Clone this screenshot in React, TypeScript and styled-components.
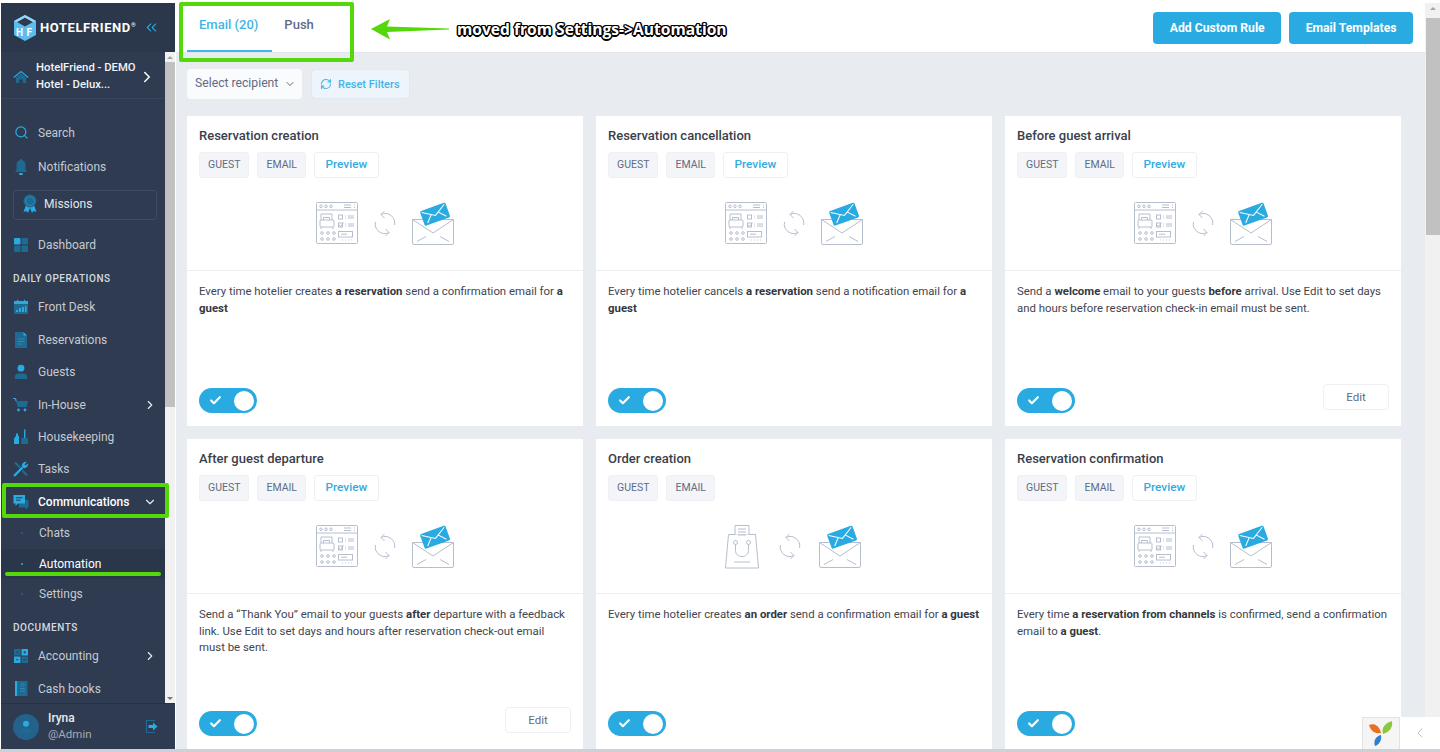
import React from "react";
import styled, { createGlobalStyle } from "styled-components";
import { ChevronRight, ChevronDown, ChevronLeft, ChevronsLeft, RefreshCw, Search, Check } from "lucide-react";

const BLUE = "#29abe2";
const DIM = "#1f6a92";

const GlobalStyle = createGlobalStyle`
  * { box-sizing: border-box; }
  html, body { margin: 0; padding: 0; height: 100%; overflow: hidden; background: #fff; }
  body { font-family: Roboto, "Liberation Sans", sans-serif; }
`;

/* ---------- sidebar icons ---------- */
const HomeIcon = () => (
  <svg width="16" height="16" viewBox="0 0 16 16">
    <path d="M3 8.500 8 4.500l5 4V14H9.800v-3.400H6.200V14H3z" fill={DIM} />
    <path d="M.8 8.500 8 2.500l7.200 6" fill="none" stroke={BLUE} strokeWidth="1.200" />
  </svg>
);
const BellIcon = () => (
  <svg width="16" height="18" viewBox="0 0 16 18">
    <path d="M8 1c.7 0 1 .5 1 1.100 2.400.6 3.500 2.700 3.500 5V12l1.500 2H2l1.500-2V7.100c0-2.300 1.100-4.400 3.500-5C7 1.500 7.300 1 8 1z" fill={DIM} />
    <rect x="6" y="15" width="4" height="2" rx="1" fill={BLUE} />
  </svg>
);
const MedalIcon = () => (
  <svg width="16" height="20" viewBox="0 0 16 20">
    <path d="M4 11 1.500 18l3-1 1.500 2 2-5 2 5 1.500-2 3 1L12 11z" fill={BLUE} />
    <circle cx="8" cy="7" r="6.500" fill={DIM} />
    <circle cx="8" cy="7" r="4.300" fill="none" stroke="#2f88b5" strokeWidth="1" />
  </svg>
);
const DashIcon = () => (
  <svg width="16" height="16" viewBox="0 0 16 16">
    <rect x="1" y="1" width="6.500" height="6.500" rx="1" fill={BLUE} />
    <rect x="8.500" y="1" width="6.500" height="6.500" rx="1" fill={DIM} />
    <rect x="1" y="8.500" width="6.500" height="6.500" rx="1" fill={DIM} />
    <rect x="8.500" y="8.500" width="6.500" height="6.500" rx="1" fill={DIM} />
  </svg>
);
const CalendarIcon = () => (
  <svg width="16" height="16" viewBox="0 0 16 16">
    <rect x="1" y="2" width="14" height="13" rx="1" fill={DIM} />
    <rect x="1" y="2" width="14" height="3" fill={BLUE} />
    <rect x="4" y="0.800" width="1.200" height="2.400" fill={BLUE} />
    <rect x="11" y="0.800" width="1.200" height="2.400" fill={BLUE} />
    <path d="M3 11h2v2H3zM6 9h2v4H6zM9 8h2v5H9zM12 7h1.500v6H12z" fill={BLUE} />
  </svg>
);
const DocIcon = () => (
  <svg width="16" height="18" viewBox="0 0 16 18">
    <path d="M2 1h8.500L14 4.500V17H2z" fill={DIM} />
    <path d="M10.500 1 14 4.500h-3.500z" fill={BLUE} />
    <path d="M4.500 8h7M4.500 10.500h7M4.500 13h4.500" stroke="#2f88b5" strokeWidth="1" />
  </svg>
);
const PersonIcon = ({ size = 16 }: { size?: number }) => (
  <svg width={size} height={size} viewBox="0 0 16 16">
    <circle cx="8" cy="4.200" r="3.400" fill={BLUE} />
    <path d="M1.800 15v-2.200c0-2 1.600-3.400 3.400-3.400h5.600c1.800 0 3.400 1.400 3.400 3.400V15z" fill={DIM} />
  </svg>
);
const CartIcon = () => (
  <svg width="16" height="16" viewBox="0 0 16 16">
    <path d="M0 1.500h2.500L3.200 4" stroke={BLUE} strokeWidth="1.200" fill="none" />
    <path d="M3 4h12l-1.500 6H4.500z" fill={DIM} />
    <circle cx="5.500" cy="13" r="1.400" fill={BLUE} />
    <circle cx="12" cy="13" r="1.400" fill={BLUE} />
  </svg>
);
const CleanIcon = () => (
  <svg width="16" height="16" viewBox="0 0 16 16">
    <path d="M1 9.500 3 7h3v8H1z" fill={BLUE} />
    <rect x="3" y="4.500" width="2" height="2.500" fill={BLUE} />
    <rect x="11" y="0.500" width="1.400" height="8.500" fill={BLUE} />
    <path d="M8.500 9h6.300l.5 6H8z" fill={DIM} />
  </svg>
);
const ToolsIcon = () => (
  <svg width="16" height="16" viewBox="0 0 16 16">
    <path d="M1 15 9.500 6.500" stroke={BLUE} strokeWidth="2.400" />
    <path d="M8.800 5.200A4 4 0 0 1 13.800 1l-2.300 2.300 1.200 1.200L15 2.200a4 4 0 0 1-4.200 5z" fill={BLUE} />
    <path d="M2 1.500 7.500 7M9.500 9.500l4.500 5" stroke={DIM} strokeWidth="2.200" />
  </svg>
);
const ChatIcon = () => (
  <svg width="16" height="16" viewBox="0 0 16 16">
    <path d="M6 6h9.500v7.500H14v2l-2.500-2H6z" fill={DIM} />
    <path d="M.5 1h11.500v8.500H5L2.500 12V9.500h-2z" fill={BLUE} />
    <path d="M3 3.800h6.500M3 6.200h4.500" stroke="#2d3a4f" strokeWidth="1" />
  </svg>
);
const CalcIcon = () => (
  <svg width="16" height="16" viewBox="0 0 16 16">
    <rect x="1" y="1" width="6.500" height="6.500" fill={DIM} />
    <rect x="8.500" y="1" width="6.500" height="6.500" fill={BLUE} />
    <rect x="1" y="8.500" width="6.500" height="6.500" fill={BLUE} />
    <rect x="8.500" y="8.500" width="6.500" height="6.500" fill={DIM} />
    <path d="M3 4.200h2.500M10.500 4.200h2.500M11.700 3v2.500M3 11.700h2.500M10.500 11.700h2.500" stroke="#2d3a4f" strokeWidth="0.800" />
  </svg>
);
const BookIcon = () => (
  <svg width="16" height="17" viewBox="0 0 16 17">
    <rect x="2" y="1" width="2.500" height="15" fill={BLUE} />
    <rect x="4.500" y="1" width="10" height="15" fill={DIM} />
    <path d="M7 8.500h5M7 11h5" stroke="#2f88b5" strokeWidth="1" />
    <circle cx="9.500" cy="5" r="1.600" fill="none" stroke="#2f88b5" strokeWidth="0.800" />
  </svg>
);
const ExitIcon = () => (
  <svg width="14" height="15" viewBox="0 0 14 15">
    <path d="M10 1.500H1.500v12H10" fill="none" stroke={DIM} strokeWidth="1.200" />
    <path d="M3.500 6h4.500V3.500l4.500 4-4.500 4V9H3.500z" fill={BLUE} />
  </svg>
);
const LogoMark = () => (
  <svg width="24" height="28" viewBox="0 0 24 28">
    <path d="M12 1 23 7v14l-11 6-11-6V7z" fill="#5dbcee" />
    <path d="M12 3.500 20 8l-8 4.500L4 8z" fill="#2d3a4f" />
    <path d="M12 1 23 7l-3 1-8-4.500L4 8 1 7z" fill="#9ad6f5" />
    <text x="3" y="22" fontFamily="Roboto, sans-serif" fontSize="10" fontWeight="700" fill="#fff">H</text>
    <text x="13.500" y="22" fontFamily="Roboto, sans-serif" fontSize="10" fontWeight="700" fill="#fff">F</text>
  </svg>
);

/* ---------- card illustrations ---------- */
const LINE = "#b6bece";

const HotelGlyph = () => (
  <g fill="none" stroke={LINE} strokeWidth="1">
    <rect x="0.500" y="0.500" width="41" height="41" rx="1" />
    <path d="M.5 8h41" />
    <circle cx="5" cy="4.300" r="1.300" />
    <circle cx="10" cy="4.300" r="1.300" />
    <circle cx="15" cy="4.300" r="1.300" />
    <path d="M28 3h7M28 5.500h7M38 3h1M38 5.500h1" />
    <path d="M5 18v-6h11v6" />
    <rect x="4" y="18" width="14" height="7" rx="1" />
    <path d="M5 25v2M17 25v2M7.500 18v-2.500h6V18" />
    <rect x="22.500" y="13" width="4" height="4" />
    <rect x="22.500" y="21" width="4" height="4" />
    <path d="M23 23l1.500 1.500 3-4M29 14h.8M29 16h.8M32 14h6M32 16h6M29 22h.8M29 24h.8M32 22h6M32 24h6" />
    <circle cx="6" cy="31" r="1.300" /><circle cx="12" cy="31" r="1.300" /><circle cx="18" cy="31" r="1.300" />
    <circle cx="6" cy="37" r="1.300" /><circle cx="12" cy="37" r="1.300" /><circle cx="18" cy="37" r="1.300" />
    <rect x="22.500" y="29.500" width="14" height="5.500" />
    <path d="M25 32.200h6M26 38h.8M29 38h.8M32 38h.8M35 38h.8" />
  </g>
);
const BagGlyph = () => (
  <g fill="none" stroke={LINE} strokeWidth="1">
    <path d="M3.500 9.500h27L33.500 43H.5z" />
    <path d="M10 9.500V.5h14v9" fill="#fff" />
    <path d="M13 4h8M13 7h8M13 10h8" />
    <circle cx="10.500" cy="17.500" r="2" />
    <circle cx="23.500" cy="17.500" r="2" />
    <path d="M10.500 19.500v6c0 8 13 8 13 0v-6M9 37h16" />
  </g>
);
const SyncGlyph = () => (
  <g fill="none" stroke={LINE} strokeWidth="1">
    <path d="M6 3.500A9.500 9.500 0 0 1 19.500 14" />
    <path d="M9.500 0 6 3.500 9.500 7" />
    <path d="M14 21.500A9.500 9.500 0 0 1 .5 11" />
    <path d="M10.500 25 14 21.500 10.500 18" />
  </g>
);
const EnvelopeGlyph = () => (
  <g>
    <g fill="none" stroke={LINE} strokeWidth="1">
      <path d="M.5 16.500h41V40a1.500 1.500 0 0 1-1.500 1.500H2A1.500 1.500 0 0 1 .5 40z" />
      <path d="M.5 16.500 21 30l20.500-13.500M5 38.500l9-5M37 38.500l-9-5" />
    </g>
    <g transform="rotate(-20 23 11)">
      <rect x="9.500" y="3.500" width="27" height="15.500" rx="1.500" fill={BLUE} />
      <path d="M11 5l12 7.500L35 5M13 17l6.500-7M33 17l-6.500-7" fill="none" stroke="#fff" strokeWidth="1" />
    </g>
  </g>
);
const Illustration = ({ kind }: { kind: "hotel" | "bag" }) => (
  <IllustrationSvg width="138" height="44" viewBox="0 0 138 44">
    {kind === "hotel" ? <HotelGlyph /> : <BagGlyph />}
    <g transform={kind === "hotel" ? "translate(59 9)" : "translate(55 9)"}><SyncGlyph /></g>
    <g transform={kind === "hotel" ? "translate(96 1)" : "translate(94 1)"}><EnvelopeGlyph /></g>
  </IllustrationSvg>
);

const ScrollBar = ({ w, thumb }: { w: number; thumb: number }) => (
  <ScrollTrack $w={w}>
    <ScrollArrow />
    <ScrollThumb $h={thumb} $wide={w > 10} />
    <ScrollArrow $down />
  </ScrollTrack>
);

/* ---------- data ---------- */
type Rule = {
  title: string;
  preview: boolean;
  edit: boolean;
  kind: "hotel" | "bag";
  text: React.ReactNode;
};

const rules: Rule[] = [
  {
    title: "Reservation creation", preview: true, edit: false, kind: "hotel",
    text: <>Every time hotelier creates <b>a reservation</b> send a confirmation email for <b>a guest</b></>,
  },
  {
    title: "Reservation cancellation", preview: true, edit: false, kind: "hotel",
    text: <>Every time hotelier cancels <b>a reservation</b> send a notification email for <b>a guest</b></>,
  },
  {
    title: "Before guest arrival", preview: true, edit: true, kind: "hotel",
    text: <>Send a <b>welcome</b> email to your guests <b>before</b> arrival. Use Edit to set days and hours before reservation check-in email must be sent.</>,
  },
  {
    title: "After guest departure", preview: true, edit: true, kind: "hotel",
    text: <>Send a “Thank You” email to your guests <b>after</b> departure with a feedback link. Use Edit to set days and hours after reservation check-out email must be sent.</>,
  },
  {
    title: "Order creation", preview: false, edit: false, kind: "bag",
    text: <>Every time hotelier creates <b>an order</b> send a confirmation email for <b>a guest</b></>,
  },
  {
    title: "Reservation confirmation", preview: true, edit: false, kind: "hotel",
    text: <>Every time <b>a reservation from channels</b> is confirmed, send a confirmation email to <b>a guest</b>.</>,
  },
];

const App: React.FC = () => {
  return (
    <Page>
      <GlobalStyle />
      <Body>
        <Sidebar>
          <Brand>
            <LogoMark />
            <BrandName>HOTELFRIEND<sup>®</sup></BrandName>
            <ChevronsLeft size={17} color={BLUE} strokeWidth={1.5} />
          </Brand>
          <SideMiddle>
            <SideColumn>
              <Hotel>
                <HomeIcon />
                <HotelName>HotelFriend - DEMO<br />Hotel - Delux...</HotelName>
                <ChevronRight size={18} color="#fff" />
              </Hotel>
              <NavList>
                <NavItem $h={34}><IconSlot><Search size={15} color={BLUE} /></IconSlot>Search</NavItem>
                <NavItem $h={34}><IconSlot><BellIcon /></IconSlot>Notifications</NavItem>
                <Missions><MedalIcon />Missions</Missions>
                <NavItem $h={32}><IconSlot><DashIcon /></IconSlot>Dashboard</NavItem>
                <SectionLabel>Daily operations</SectionLabel>
                <NavItem><IconSlot><CalendarIcon /></IconSlot>Front Desk</NavItem>
                <NavItem><IconSlot><DocIcon /></IconSlot>Reservations</NavItem>
                <NavItem><IconSlot><PersonIcon /></IconSlot>Guests</NavItem>
                <NavItem><IconSlot><CartIcon /></IconSlot>In-House<Caret><ChevronRight size={14} /></Caret></NavItem>
                <NavItem><IconSlot><CleanIcon /></IconSlot>Housekeeping</NavItem>
                <NavItem><IconSlot><ToolsIcon /></IconSlot>Tasks</NavItem>
                <NavItem $active><IconSlot><ChatIcon /></IconSlot>Communications<Caret><ChevronDown size={14} /></Caret></NavItem>
                <SubItem>Chats</SubItem>
                <SubItem $active>Automation</SubItem>
                <SubItem>Settings</SubItem>
                <SectionLabel>Documents</SectionLabel>
                <NavItem><IconSlot><CalcIcon /></IconSlot>Accounting<Caret><ChevronRight size={14} /></Caret></NavItem>
                <NavItem><IconSlot><BookIcon /></IconSlot>Cash books</NavItem>
              </NavList>
            </SideColumn>
            <ScrollBar w={10} thumb={345} />
          </SideMiddle>
          <UserBar>
            <Avatar><PersonIcon size={14} /></Avatar>
            <UserText>
              <UserName>Iryna</UserName>
              <UserRole>@Admin</UserRole>
            </UserText>
            <ExitIcon />
          </UserBar>
        </Sidebar>

        <Main>
          <TopBar>
            <Tabs>
              <Tab $active>Email (20)</Tab>
              <Tab>Push</Tab>
            </Tabs>
            <Actions>
              <PrimaryButton>Add Custom Rule</PrimaryButton>
              <PrimaryButton>Email Templates</PrimaryButton>
            </Actions>
          </TopBar>
          <Content>
            <Filters>
              <SelectBox>Select recipient<ChevronDown size={12} /></SelectBox>
              <ResetButton><RefreshCw size={12} strokeWidth={2.2} />Reset Filters</ResetButton>
            </Filters>
            <CardGrid>
              {rules.map((rule) => (
                <Card key={rule.title}>
                  <CardTitle>{rule.title}</CardTitle>
                  <Badges>
                    <Badge>GUEST</Badge>
                    <Badge>EMAIL</Badge>
                    {rule.preview && <PreviewBadge>Preview</PreviewBadge>}
                  </Badges>
                  <Picture><Illustration kind={rule.kind} /></Picture>
                  <Description>{rule.text}</Description>
                  <CardFooter>
                    <Toggle>
                      <Check size={13} color="#fff" strokeWidth={4} />
                      <Knob />
                    </Toggle>
                    {rule.edit && <EditButton>Edit</EditButton>}
                  </CardFooter>
                </Card>
              ))}
            </CardGrid>
          </Content>
        </Main>
        <ScrollBar w={15} thumb={217} />
      </Body>
      <BottomStrip />

      <TabsHighlight />
      <MenuHighlight />
      <MenuUnderline />
      <ArrowSvg width="80" height="22" viewBox="0 0 80 22">
        <path d="M0 11 19 1l-3 7.500 62 2v1l-62 2.500 3 7.500z" fill="#55d80a" />
      </ArrowSvg>
      <Note>moved from Settings-&gt;Automation</Note>

      <DebugBar>
        <DebugLogo>
          <svg width="24" height="27" viewBox="0 0 24 27">
            <path d="M0 5c5-2 10 0 12 8-5 1-10-1-12-8z" fill="#ea6f22" />
            <path d="M14 14c-2-6 2-11 9-13 1 6-2 11-9 13z" fill="#8ec63f" />
            <path d="M12 15c1 5-2 10-6 11-2-5 1-10 6-11z" fill="#2f80cf" />
          </svg>
        </DebugLogo>
        <DebugToggle><ChevronLeft size={16} strokeWidth={1.200} color="#b5b5b5" /></DebugToggle>
      </DebugBar>
    </Page>
  );
};

export default App;

const Page = styled.div`
  position: relative;
  display: flex;
  flex-direction: column;
  width: 1440px;
  height: 752px;
  overflow: hidden;
  background: #fff;
`;

const Body = styled.div`
  display: flex;
  flex: 1;
  min-height: 0;
`;

const BottomStrip = styled.div`
  height: 3px;
  background: #ccd1d8;
`;

const Sidebar = styled.aside`
  display: flex;
  flex-direction: column;
  width: 174px;
  margin: 3px 0 0 1px;
  background: #2e3b50;
  flex-shrink: 0;
`;

const Brand = styled.div`
  display: flex;
  align-items: center;
  height: 49px;
  padding: 0 15px 0 12px;
  background: #2b374b;
  svg:last-child { margin-left: auto; }
`;

const BrandName = styled.div`
  margin-left: 3px;
  color: #fff;
  font-size: 13px;
  font-weight: 700;
  letter-spacing: 0.6px;
  sup { font-size: 6px; font-weight: 400; vertical-align: 5px; line-height: 0; }
`;

const SideMiddle = styled.div`
  display: flex;
  flex: 1;
  min-height: 0;
`;

const SideColumn = styled.div`
  display: flex;
  flex-direction: column;
  flex: 1;
  min-width: 0;
  overflow: hidden;
`;

const Hotel = styled.div`
  display: flex;
  align-items: center;
  flex-shrink: 0;
  height: 47px;
  padding: 3px 9px 0 12px;
  border-bottom: 1px solid #38455b;
  svg:last-child { margin-left: auto; }
`;

const HotelName = styled.div`
  margin-left: 7px;
  color: #f1f3f6;
  font-size: 11.3px;
  font-weight: 500;
  line-height: 16.5px;
  white-space: nowrap;
`;

const NavList = styled.nav`
  display: flex;
  flex-direction: column;
  padding-top: 16.6px;
`;

const NavItem = styled.div<{ $active?: boolean; $h?: number }>`
  display: flex;
  align-items: center;
  flex-shrink: 0;
  height: ${({ $h }) => $h ?? 32.4}px;
  padding: 0 8px 0 12px;
  color: ${({ $active }) => ($active ? "#fff" : "#c5cad2")};
  font-size: 12px;
  font-weight: ${({ $active }) => ($active ? 500 : 400)};
  white-space: nowrap;
`;

const IconSlot = styled.span`
  display: flex;
  align-items: center;
  justify-content: center;
  width: 16px;
  margin-right: 9px;
`;

const Caret = styled.span`
  display: flex;
  margin-left: auto;
  color: #e6e9ee;
`;

const Missions = styled.div`
  display: flex;
  align-items: center;
  gap: 6px;
  flex-shrink: 0;
  height: 30px;
  margin: 6px 8px 9px 12px;
  padding: 0 0 1px 8px;
  border: 1px solid #3e4b61;
  border-radius: 3px;
  color: #e3e6eb;
  font-size: 12px;
`;

const SectionLabel = styled.div`
  display: flex;
  align-items: flex-end;
  flex-shrink: 0;
  height: 26px;
  padding: 0 0 3px 12px;
  margin-bottom: 4.6px;
  color: #d5d9df;
  font-size: 10px;
  font-weight: 500;
  letter-spacing: 0.55px;
  text-transform: uppercase;
`;

const SubItem = styled.div<{ $active?: boolean }>`
  display: flex;
  align-items: center;
  flex-shrink: 0;
  height: 30.6px;
  padding-left: 38px;
  position: relative;
  background: ${({ $active }) => ($active ? "#2a364a" : "transparent")};
  color: ${({ $active }) => ($active ? "#fff" : "#c5cad2")};
  font-size: 12px;
  &::before {
    content: "";
    position: absolute;
    left: 20px;
    top: 14px;
    width: 2px;
    height: 2px;
    border-radius: 50%;
    background: ${({ $active }) => ($active ? BLUE : DIM)};
  }
`;

const UserBar = styled.div`
  display: flex;
  align-items: center;
  flex-shrink: 0;
  height: 46px;
  padding: 0 16px 0 12px;
  border-top: 1px solid #263244;
`;

const Avatar = styled.div`
  display: flex;
  align-items: center;
  justify-content: center;
  width: 26px;
  height: 26px;
  border-radius: 50%;
  background: #23628a;
`;

const UserText = styled.div`
  flex: 1;
  margin-left: 9px;
`;

const UserName = styled.div`
  color: #e8ebef;
  font-size: 12px;
  font-weight: 500;
  line-height: 16px;
`;

const UserRole = styled.div`
  color: #a3abb7;
  font-size: 11.5px;
  line-height: 17px;
`;

const ScrollTrack = styled.div<{ $w: number }>`
  display: flex;
  flex-direction: column;
  flex-shrink: 0;
  width: ${({ $w }) => $w}px;
  margin-top: ${({ $w }) => ($w > 10 ? 3 : 0)}px;
  background: #f1f1f1;
`;

const ScrollArrow = styled.div<{ $down?: boolean }>`
  display: flex;
  align-items: center;
  justify-content: center;
  flex-shrink: 0;
  height: 10px;
  margin-top: ${({ $down }) => ($down ? "auto" : "0")};
  &::after {
    content: "";
    border: 3px solid transparent;
    border-top-color: ${({ $down }) => ($down ? "#7a7a7a" : "transparent")};
    border-bottom-color: ${({ $down }) => ($down ? "transparent" : "#a3a3a3")};
    margin-top: ${({ $down }) => ($down ? 3 : -3)}px;
  }
`;

const ScrollThumb = styled.div<{ $h: number; $wide: boolean }>`
  height: ${({ $h }) => $h}px;
  margin-top: ${({ $wide }) => ($wide ? 5 : 0)}px;
  margin-left: ${({ $wide }) => ($wide ? 1 : 0)}px;
  background: #c1c1c1;
`;

const Main = styled.main`
  display: flex;
  flex-direction: column;
  flex: 1;
  min-width: 0;
  margin-left: 1px;
`;

const TopBar = styled.header`
  display: flex;
  align-items: flex-start;
  justify-content: space-between;
  flex-shrink: 0;
  height: 53px;
  padding: 0 12px 0 11px;
  background: #fff;
  border-bottom: 1px solid #e2e5ea;
`;

const Tabs = styled.div`
  display: flex;
  height: 52px;
`;

const Tab = styled.div<{ $active?: boolean }>`
  display: flex;
  align-items: center;
  height: 52px;
  padding: 0 14px 1px 12px;
  border-bottom: 2px solid ${({ $active }) => ($active ? "#43b4e6" : "transparent")};
  color: ${({ $active }) => ($active ? "#43b4e6" : "#5f6c84")};
  font-size: 13px;
  font-weight: 500;
`;

const Actions = styled.div`
  display: flex;
  gap: 8px;
  padding-top: 12px;
`;

const PrimaryButton = styled.button`
  height: 32px;
  padding: 0 16.5px;
  border: 0;
  border-radius: 4px;
  background: ${BLUE};
  color: #fff;
  font-family: inherit;
  font-size: 12.2px;
  font-weight: 700;
`;

const Content = styled.div`
  flex: 1;
  min-height: 0;
  overflow: hidden;
  padding: 16px 0 0 11px;
  background: #e8ebf0;
`;

const Filters = styled.div`
  display: flex;
  gap: 9px;
  margin-bottom: 17px;
`;

const SelectBox = styled.div`
  display: flex;
  align-items: center;
  justify-content: space-between;
  width: 115px;
  height: 30px;
  padding: 0 6px 3px 8px;
  border-radius: 4px;
  background: #fafbfc;
  color: #5f6c84;
  font-size: 12.2px;
  svg { margin-top: 3px; }
`;

const ResetButton = styled.div`
  display: flex;
  align-items: center;
  gap: 6px;
  width: 99px;
  height: 30px;
  padding-left: 8px;
  border: 1px solid #dfe9f3;
  border-radius: 4px;
  background: #edf4fb;
  color: #43b4e6;
  font-size: 11px;
  font-weight: 500;
`;

const CardGrid = styled.div`
  display: grid;
  grid-template-columns: repeat(3, 396px);
  grid-auto-rows: 310px;
  gap: 13px;
`;

const Card = styled.section`
  display: flex;
  flex-direction: column;
  background: #fff;
`;

const CardTitle = styled.h3`
  margin: 0;
  padding: 12px 12px 0;
  color: #3a404b;
  font-size: 13px;
  font-weight: 500;
  line-height: 16px;
`;

const Badges = styled.div`
  display: flex;
  gap: 8px;
  margin-top: 8px;
  padding: 0 12px;
`;

const Badge = styled.span`
  display: flex;
  align-items: center;
  justify-content: center;
  height: 26px;
  padding: 0 8px 1px;
  border: 1px solid #eef0f4;
  border-radius: 3px;
  background: #f3f5f8;
  color: #5f6c84;
  font-size: 10.5px;
  font-weight: 400;
`;

const PreviewBadge = styled(Badge)`
  padding: 0 10.5px 2px;
  background: #fff;
  color: #33ace2;
  font-size: 11.8px;
  font-weight: 500;
`;

const Picture = styled.div`
  display: flex;
  align-items: center;
  justify-content: center;
  height: 93px;
  border-bottom: 1px solid #eceef2;
`;

const IllustrationSvg = styled.svg`
  display: block;
`;

const Description = styled.p`
  flex: 1;
  margin: 0;
  padding: 12px 12px 0;
  color: #3f4550;
  font-size: 11.4px;
  line-height: 16.7px;
  b { font-weight: 700; color: #33383f; }
`;

const CardFooter = styled.div`
  display: flex;
  align-items: flex-end;
  justify-content: space-between;
  padding: 0 12px 13px;
`;

const Toggle = styled.div`
  display: flex;
  align-items: center;
  justify-content: space-between;
  width: 58px;
  height: 25px;
  padding: 0 3px 0 10px;
  border-radius: 13px;
  background: ${BLUE};
`;

const Knob = styled.span`
  width: 20px;
  height: 20px;
  border-radius: 50%;
  background: #fff;
`;

const EditButton = styled.button`
  width: 66px;
  height: 26px;
  margin-bottom: 3px;
  border: 1px solid #eef0f4;
  border-radius: 4px;
  background: #fff;
  color: #5f6c84;
  font-family: inherit;
  font-size: 11.5px;
`;

/* annotations painted over the screenshot */
const TabsHighlight = styled.div`
  position: absolute;
  left: 179px;
  top: 2px;
  width: 175px;
  height: 60px;
  border: 4px solid #55d80a;
  border-radius: 2px;
  pointer-events: none;
`;

const MenuHighlight = styled.div`
  position: absolute;
  left: 2px;
  top: 483px;
  width: 167px;
  height: 35px;
  border: 4px solid #55d80a;
  border-radius: 2px;
`;

const MenuUnderline = styled.div`
  position: absolute;
  left: 5px;
  top: 572px;
  width: 156px;
  height: 4px;
  border-radius: 2px;
  background: #55d80a;
`;

const ArrowSvg = styled.svg`
  position: absolute;
  left: 371px;
  top: 18px;
`;

const Note = styled.div`
  position: absolute;
  left: 457px;
  top: 19px;
  color: #fff;
  font-family: "Open Sans", sans-serif;
  font-size: 15.6px;
  font-weight: 700;
  line-height: 20px;
  white-space: nowrap;
  text-shadow: 1.5px 0 0 #000, -1.5px 0 0 #000, 0 1.5px 0 #000, 0 -1.5px 0 #000,
    1px 1px 0 #000, -1px 1px 0 #000, 1px -1px 0 #000, -1px -1px 0 #000;
`;

const DebugBar = styled.div`
  position: absolute;
  right: 0;
  bottom: 3px;
  display: flex;
  height: 32px;
`;

const DebugLogo = styled.div`
  display: flex;
  align-items: center;
  justify-content: center;
  width: 38px;
  border: 1px solid #e2e2e2;
  border-bottom: 0;
  background: #f5f5f5;
`;

const DebugToggle = styled.div`
  display: flex;
  align-items: center;
  justify-content: center;
  width: 40px;
  background: #fff;
`;
